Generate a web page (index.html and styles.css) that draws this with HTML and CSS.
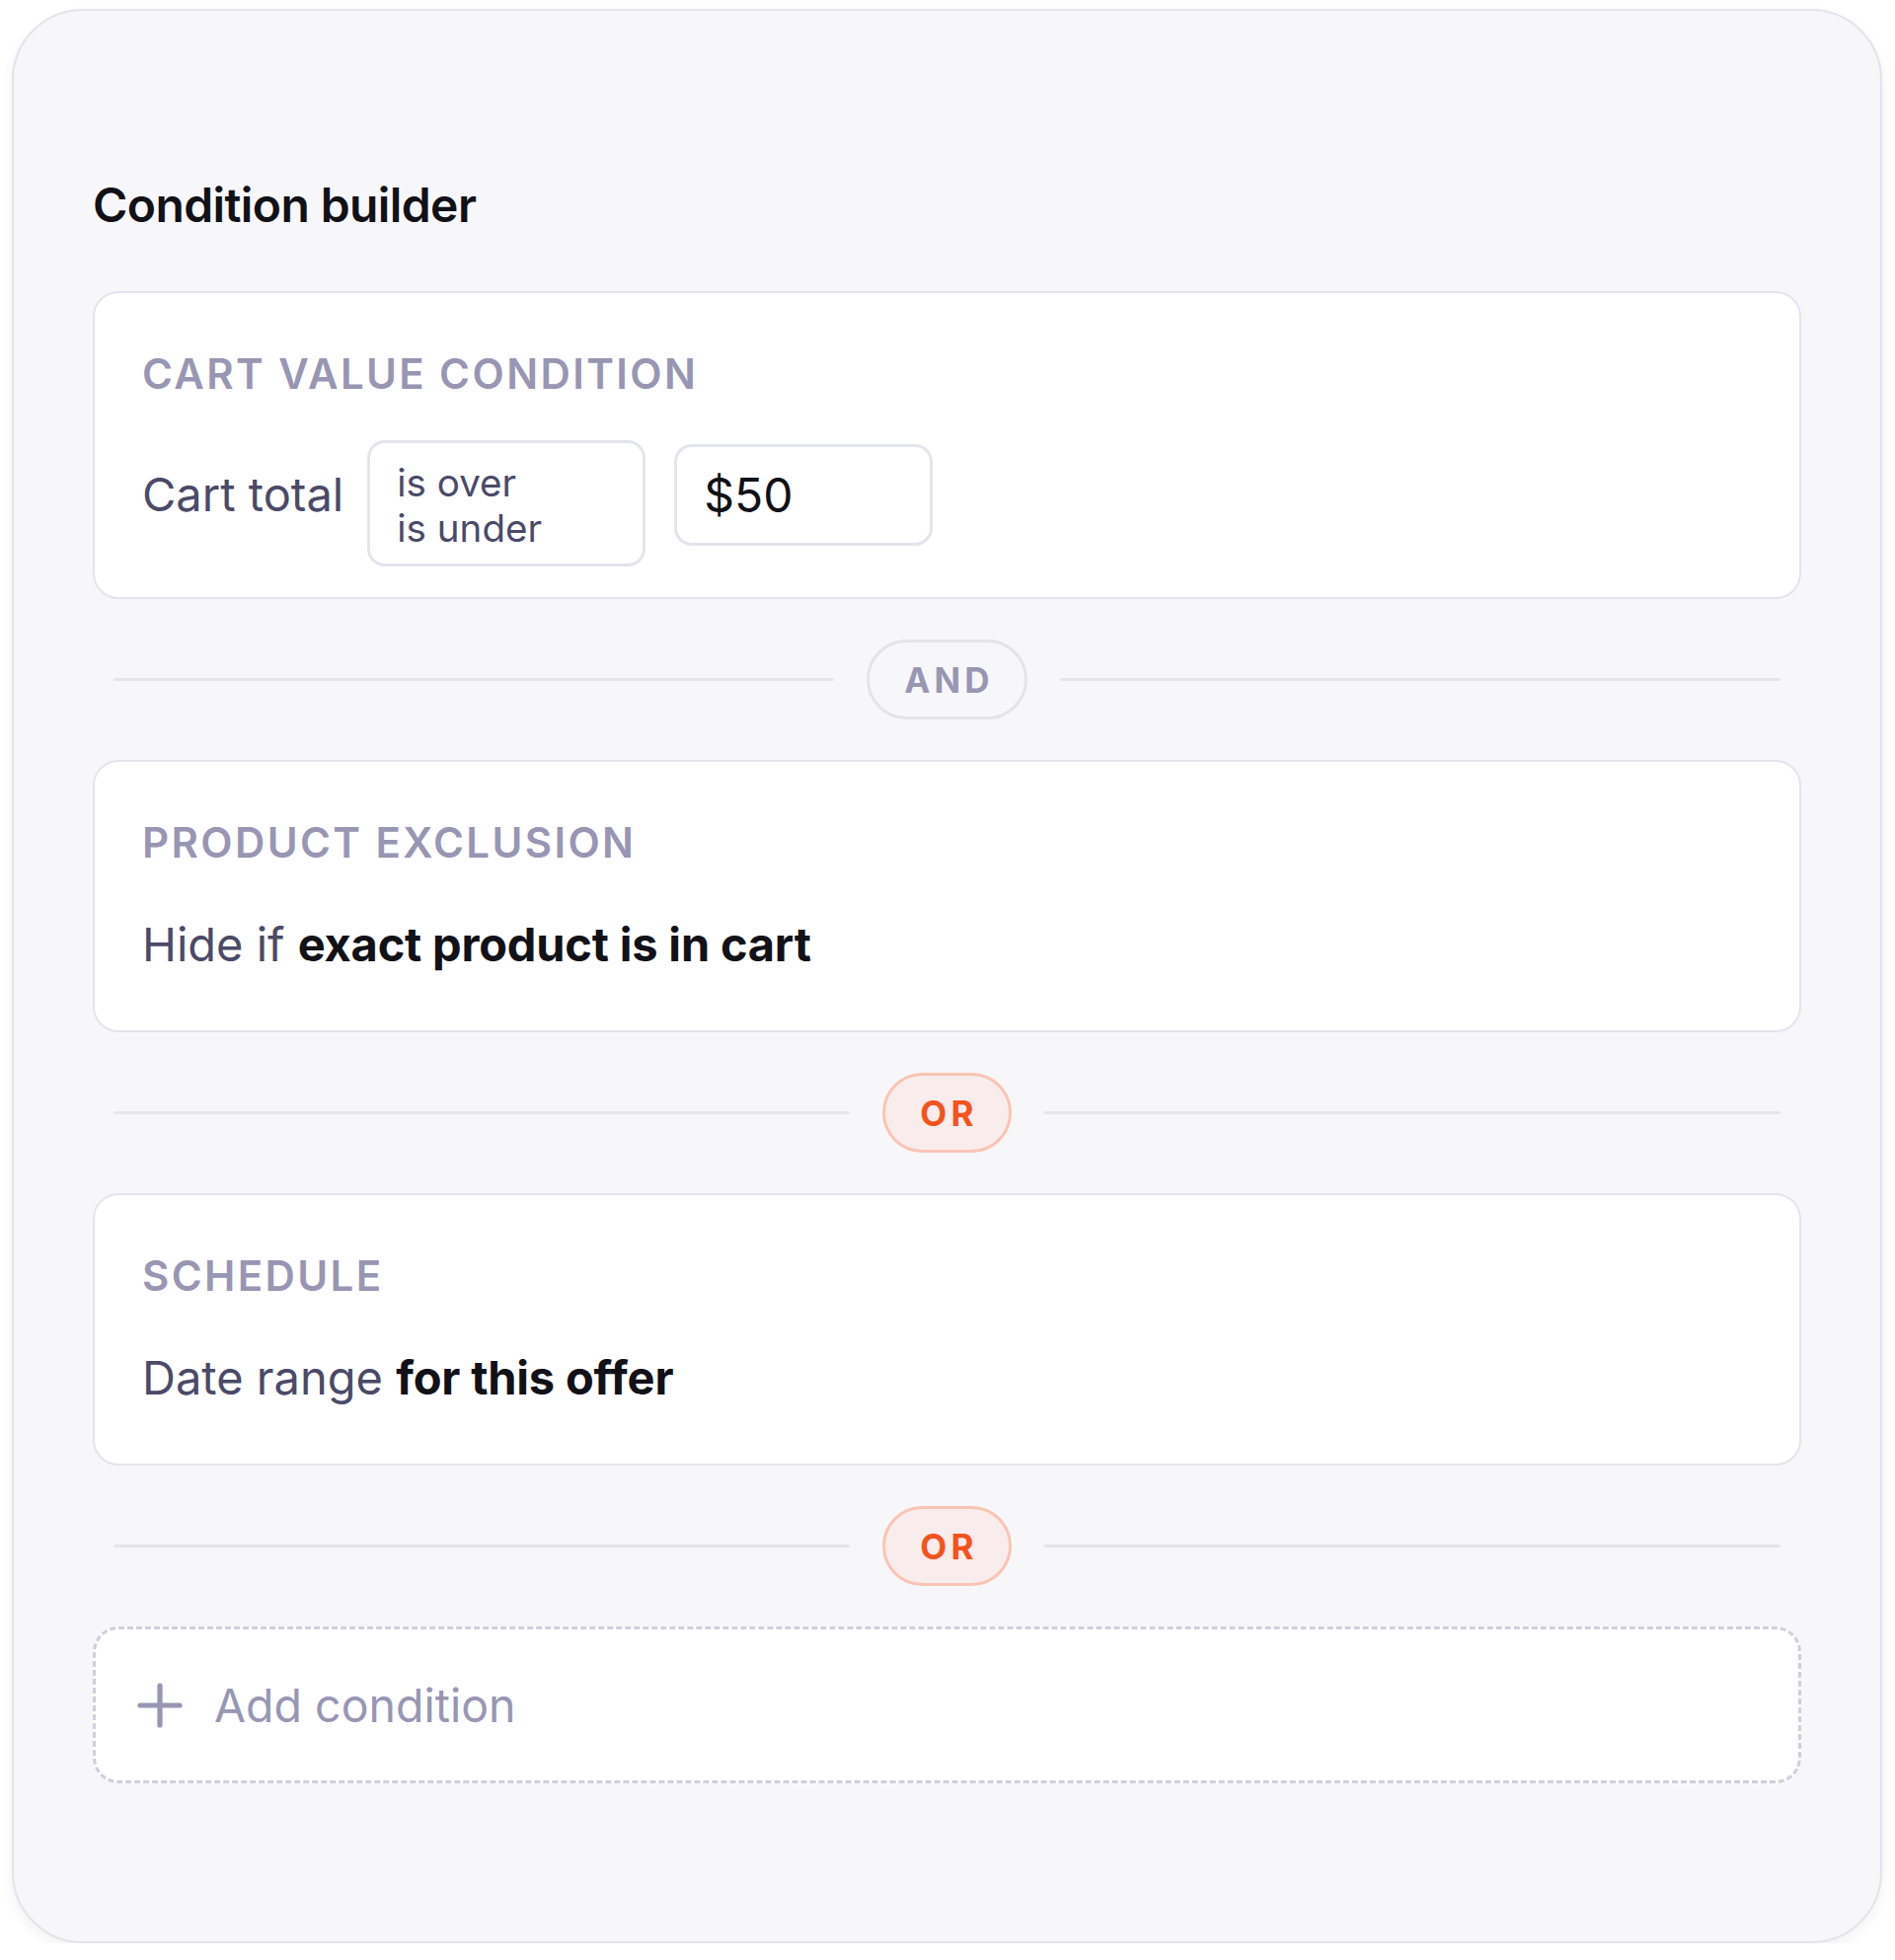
FILE: index.html
```html
<!DOCTYPE html>
<html lang="en">
<head>
<meta charset="utf-8">
<title>Condition builder</title>
<link rel="stylesheet" href="styles.css">
</head>
<body>
<div class="panel">
  <h1 class="title">Condition builder</h1>
  <div class="stack">
    <section class="cond-card cond-card--cart">
      <div class="cond-label">CART VALUE CONDITION</div>
      <div class="cart-row">
        <span class="row-text">Cart total</span>
        <div class="listbox">
          <div class="opt">is over</div>
          <div class="opt">is under</div>
        </div>
        <div class="value-input">$50</div>
      </div>
    </section>

    <div class="joiner">
      <span class="joiner-line"></span>
      <span class="pill pill--and">AND</span>
      <span class="joiner-line"></span>
    </div>

    <section class="cond-card">
      <div class="cond-label">PRODUCT EXCLUSION</div>
      <p class="cond-text">Hide if <strong>exact product is in cart</strong></p>
    </section>

    <div class="joiner">
      <span class="joiner-line"></span>
      <span class="pill pill--or">OR</span>
      <span class="joiner-line"></span>
    </div>

    <section class="cond-card">
      <div class="cond-label">SCHEDULE</div>
      <p class="cond-text">Date range <strong>for this offer</strong></p>
    </section>

    <div class="joiner">
      <span class="joiner-line"></span>
      <span class="pill pill--or">OR</span>
      <span class="joiner-line"></span>
    </div>

    <button class="add-cond" type="button">
      <svg class="add-icon" width="46" height="46" viewBox="0 0 46 46" aria-hidden="true">
        <path d="M23 3 V43 M3 23 H43" fill="none" stroke="currentColor" stroke-width="5.2" stroke-linecap="round"/>
      </svg>
      <span>Add condition</span>
    </button>
  </div>
</div>
</body>
</html>
```

FILE: styles.css
```css
* { box-sizing: border-box; }

html, body {
  margin: 0;
  padding: 0;
  background: #ffffff;
}

body {
  font-family: Inter, "Noto Sans", "Liberation Sans", sans-serif;
  color: #4b4a68;
}

.panel {
  margin: 9px 13px 0 12px;
  background: #f7f7f9;
  border: 2px solid #e3e3ea;
  border-radius: 72px;
  padding: 168px 80px 160px 80px;
  box-shadow: 0 6px 14px rgba(30, 30, 60, 0.06);
}

.title {
  margin: 0 0 58px 0;
  font-size: 48px;
  line-height: 58px;
  font-weight: 600;
  color: #111117;
  letter-spacing: -0.6px;
}

.stack {
  display: flex;
  flex-direction: column;
}

.cond-card {
  background: #ffffff;
  border: 2px solid #e4e4ec;
  border-radius: 26px;
  padding: 58px 48px;
}

.cond-card--cart {
  padding-bottom: 31px;
}

.cond-label {
  font-size: 42px;
  line-height: 48px;
  font-weight: 600;
  letter-spacing: 0.057em;
  color: #9896b3;
  margin-bottom: 50px;
}

.cond-card--cart .cond-label {
  margin-bottom: 43px;
}

.cond-text {
  margin: 0;
  font-size: 47px;
  line-height: 58px;
  color: #4b4a68;
}

.cond-text strong {
  font-weight: 700;
  color: #111117;
  letter-spacing: -0.2px;
}

.cart-row {
  display: flex;
  align-items: flex-start;
  gap: 24px;
}

.row-text {
  margin-top: 26px;
  font-size: 47px;
  line-height: 58px;
  color: #4b4a68;
}

.listbox {
  width: 282px;
  height: 128px;
  border: 3px solid #e4e4ec;
  border-radius: 18px;
  padding: 17px 27px 0;
  background: #ffffff;
}

.opt {
  font-size: 38.6px;
  line-height: 46px;
  color: #4b4a68;
}

.value-input {
  margin-top: 4px;
  margin-left: 5px;
  width: 262px;
  height: 103px;
  border: 3px solid #e4e4ec;
  border-radius: 18px;
  padding: 0 27px;
  display: flex;
  align-items: center;
  font-size: 48px;
  color: #111117;
  background: #ffffff;
}

.joiner {
  display: flex;
  align-items: center;
  gap: 33px;
  padding: 41px 21px;
}

.joiner-line {
  flex: 1;
  height: 3px;
  background: #e4e4ea;
  border-radius: 2px;
}

.pill {
  height: 81px;
  display: flex;
  align-items: center;
  justify-content: center;
  padding: 0 31px 0 35px;
  border-radius: 41px;
  border: 3px solid;
  font-size: 35px;
  font-weight: 700;
  letter-spacing: 0.12em;
}

.pill--and {
  background: #f7f7f9;
  border-color: #e3e3ea;
  color: #9896b3;
}

.pill--or {
  background: #f9ecec;
  border-color: #f9c4b4;
  color: #f4531d;
}

.add-cond {
  display: flex;
  align-items: center;
  gap: 32px;
  width: 100%;
  height: 159px;
  padding: 0 0 0 42px;
  background: #ffffff;
  border: 3px dashed #cfcfdc;
  border-radius: 26px;
  font-family: inherit;
  font-size: 46.5px;
  color: #9896b3;
  text-align: left;
  cursor: pointer;
}

.add-icon {
  display: block;
  color: #9896b3;
  flex: none;
}
```
